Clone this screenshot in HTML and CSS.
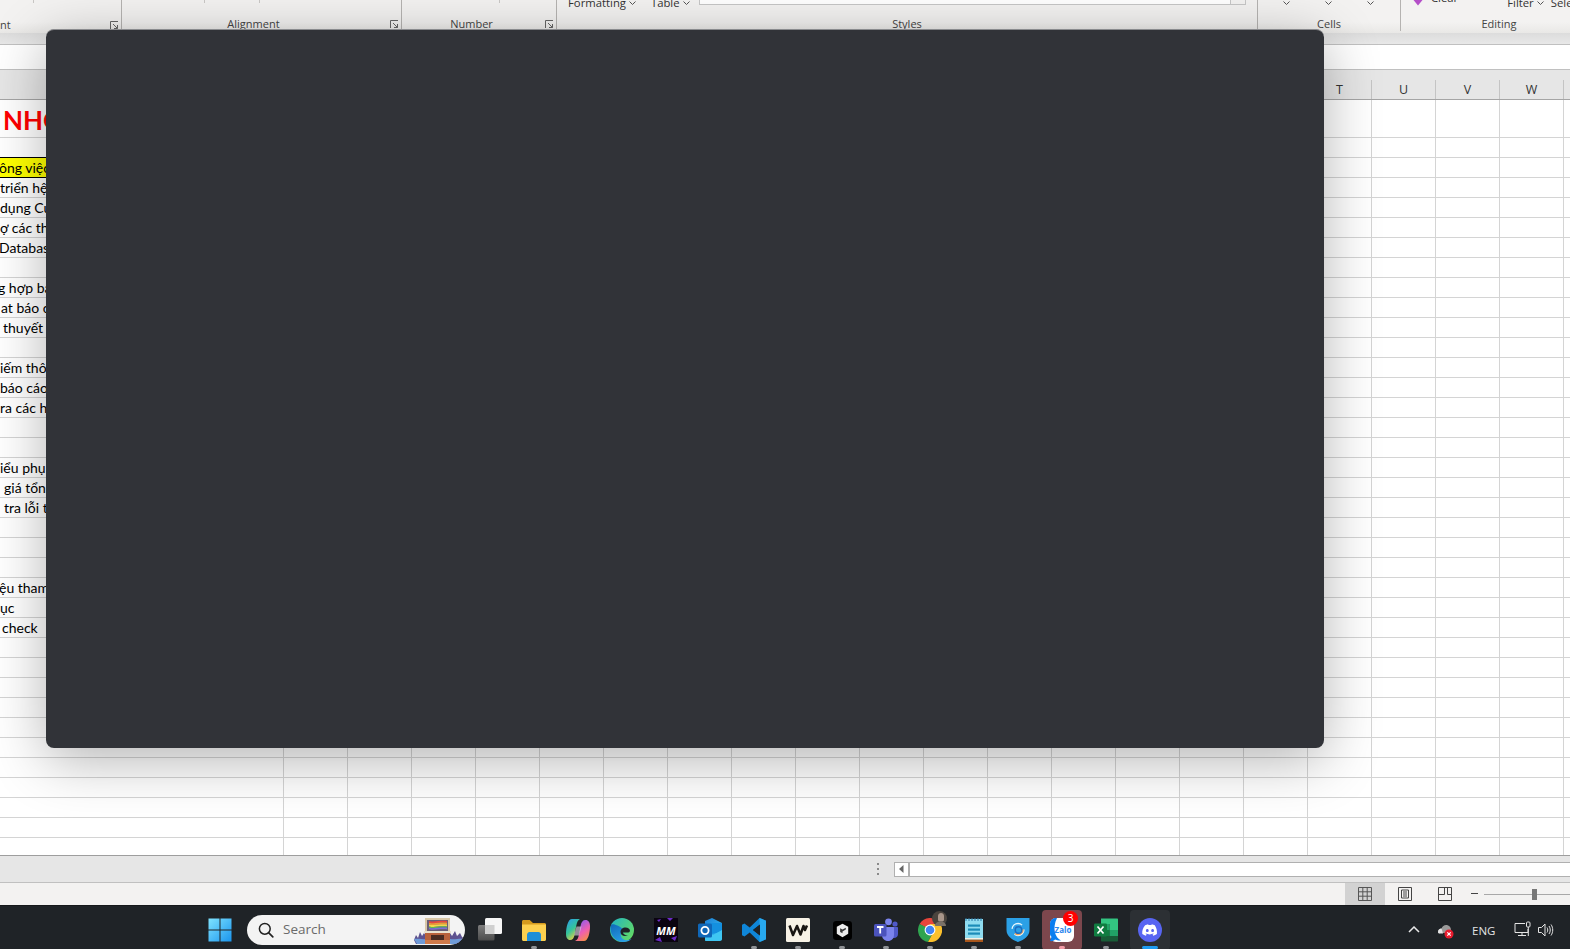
FILE: index.html
```html
<!DOCTYPE html>
<html lang="vi">
<head>
<meta charset="utf-8">
<title>Excel</title>
<link rel="stylesheet" href="styles.css">
</head>
<body>
<div class="app">
  <header class="ribbon">
    <section class="grp g-font">
      <div class="grp-top"><i class="tick tick-1"></i></div>
      <div class="grp-label"><span class="lab-cut">nt</span><svg class="launch" viewBox="0 0 9 9"><path d="M.5 8V.5H8M3 3l4.500 4.500M4 7.500h3.500V4" fill="none" stroke="#666"/></svg></div>
    </section>
    <section class="grp g-align">
      <div class="grp-top"><i class="tick tick-2"></i><i class="tick tick-3"></i></div>
      <div class="grp-label"><span>Alignment</span><svg class="launch" viewBox="0 0 9 9"><path d="M.5 8V.5H8M3 3l4.500 4.500M4 7.500h3.500V4" fill="none" stroke="#666"/></svg></div>
    </section>
    <section class="grp g-num">
      <div class="grp-top"><i class="tick tick-4"></i></div>
      <div class="grp-label"><span>Number</span><svg class="launch" viewBox="0 0 9 9"><path d="M.5 8V.5H8M3 3l4.500 4.500M4 7.500h3.500V4" fill="none" stroke="#666"/></svg></div>
    </section>
    <section class="grp g-styles">
      <div class="grp-top styles-top">
        <span class="cmd">Formatting<svg class="chev" viewBox="0 0 7 4"><path d="M.5.500l3 3 3-3" fill="none" stroke="#555"/></svg></span>
        <span class="cmd">Table<svg class="chev" viewBox="0 0 7 4"><path d="M.5.500l3 3 3-3" fill="none" stroke="#555"/></svg></span>
        <div class="gallery"><i class="gallery-btn"></i></div>
      </div>
      <div class="grp-label"><span>Styles</span></div>
    </section>
    <section class="grp g-cells">
      <div class="grp-top cells-top">
        <svg class="chev" viewBox="0 0 7 4"><path d="M.5.500l3 3 3-3" fill="none" stroke="#555"/></svg>
        <svg class="chev" viewBox="0 0 7 4"><path d="M.5.500l3 3 3-3" fill="none" stroke="#555"/></svg>
        <svg class="chev" viewBox="0 0 7 4"><path d="M.5.500l3 3 3-3" fill="none" stroke="#555"/></svg>
      </div>
      <div class="grp-label"><span>Cells</span></div>
    </section>
    <section class="grp g-edit">
      <div class="grp-top edit-top">
        <svg class="diamond" viewBox="0 0 10 10"><path d="M5 9.500L.5 4 3 .5h4L9.500 4z" fill="#b44fc8"/></svg>
        <span class="cmd clear">Clear</span>
        <span class="cmd filter">Filter<svg class="chev" viewBox="0 0 7 4"><path d="M.5.500l3 3 3-3" fill="none" stroke="#555"/></svg></span>
        <span class="cmd">Sele</span>
      </div>
      <div class="grp-label"><span>Editing</span></div>
    </section>
  </header>

  <div class="formula-gap"></div>
  <div class="formula-bar"></div>
  <div class="col-head">
    <div class="col-spacer"></div>
    <div class="col">T</div>
    <div class="col">U</div>
    <div class="col">V</div>
    <div class="col">W</div>
  </div>

  <main class="sheet">
    <div class="row row-title"><div class="cell title">NHO</div></div>
    <div class="row"><div class="cell"></div></div>
    <div class="row"><div class="cell hl in-n1">ông việc</div></div>
    <div class="row"><div class="cell in0">triển hệ</div></div>
    <div class="row"><div class="cell in0">dụng Cu</div></div>
    <div class="row"><div class="cell in0">ợ các th</div></div>
    <div class="row"><div class="cell in-n1">Databas</div></div>
    <div class="row"><div class="cell"></div></div>
    <div class="row"><div class="cell in-n2">g hợp bá</div></div>
    <div class="row"><div class="cell in1">at báo c</div></div>
    <div class="row"><div class="cell in3">thuyết</div></div>
    <div class="row"><div class="cell"></div></div>
    <div class="row"><div class="cell in0">iếm thô</div></div>
    <div class="row"><div class="cell in0">báo cáo</div></div>
    <div class="row"><div class="cell in0">ra các hu</div></div>
    <div class="row"><div class="cell"></div></div>
    <div class="row"><div class="cell"></div></div>
    <div class="row"><div class="cell in0">iểu phụ</div></div>
    <div class="row"><div class="cell in4">giá tổn</div></div>
    <div class="row"><div class="cell in4">tra lỗi t</div></div>
    <div class="row"><div class="cell"></div></div>
    <div class="row"><div class="cell"></div></div>
    <div class="row"><div class="cell"></div></div>
    <div class="row"><div class="cell in-n1">ệu tham</div></div>
    <div class="row"><div class="cell in0">ục</div></div>
    <div class="row"><div class="cell in2">check</div></div>
    <div class="row"><div class="cell"></div></div>
    <div class="row"><div class="cell"></div></div>
    <div class="row"><div class="cell"></div></div>
    <div class="row"><div class="cell"></div></div>
    <div class="row"><div class="cell"></div></div>
    <div class="row"><div class="cell"></div></div>
    <div class="row"><div class="cell"></div></div>
    <div class="row"><div class="cell"></div></div>
    <div class="row"><div class="cell"></div></div>
    <div class="row"><div class="cell"></div></div>
    <div class="row row-last"><div class="cell"></div></div>
  </main>

  <div class="tabs-bar">
    <div class="split-dots"><i></i><i></i><i></i></div>
    <div class="hscroll">
      <div class="hscroll-btn"><svg viewBox="0 0 5 8"><path d="M4.500 0v8L0 4z" fill="#666"/></svg></div>
    </div>
  </div>

  <footer class="status">
    <div class="view view-on"><svg viewBox="0 0 14 14"><path d="M.5.500h13v13H.5zM4.800.500v13M9.200.500v13M.5 4.800h13M.5 9.200h13" fill="none" stroke="#555"/></svg></div>
    <div class="view"><svg viewBox="0 0 14 14"><path d="M.5.500h13v13H.5z" fill="none" stroke="#444"/><path d="M3.500 3h7v8h-7zM5 5h4M5 7h4M5 9h4" fill="none" stroke="#444"/></svg></div>
    <div class="view"><svg viewBox="0 0 14 14"><path d="M.5.500h13v13H.5zM.5 7.500h6V.5M9.500.5v7h4" fill="none" stroke="#444"/></svg></div>
    <div class="zoom-minus"></div>
    <div class="zoom-track"><i class="zoom-thumb"></i></div>
  </footer>

  <nav class="taskbar">
    <div class="tile tile-start">
      <svg class="ico" viewBox="0 0 24 24"><defs><linearGradient id="wg" x1="0" y1="0" x2="1" y2="1"><stop offset="0" stop-color="#7fe3ff"/><stop offset="1" stop-color="#1a95ee"/></linearGradient></defs><path fill="url(#wg)" d="M.5.500h11v11H.5zM12.500.500h11v11h-11zM.5 12.500h11v11H.5zM12.500 12.500h11v11h-11z"/></svg>
    </div>
    <div class="search">
      <svg class="search-ico" viewBox="0 0 16 16"><circle cx="6.800" cy="6.800" r="5.400" fill="none" stroke="#222" stroke-width="1.500"/><path d="M10.800 10.800l4 4" stroke="#222" stroke-width="1.700" stroke-linecap="round"/></svg>
      <span class="search-text">Search</span>
      <svg class="search-art" viewBox="0 0 51 26">
        <path d="M0 22l2-5 2 3 2-6 2 4 2-3 2 3 3-1v9H2z" fill="#5d5290"/>
        <path d="M36 15l2 3 3-5 2 5 3-3 2 4 3 2v5H36z" fill="#5d5290"/>
        <path d="M0 21c5-1 9 1 15 0v5H3zM36 21c5 1 9-1 15 0l-3 5H36z" fill="#6f9bd8"/>
        <rect x="11" y="0" width="25" height="2" fill="#d9c8a8"/>
        <rect x="11" y="2" width="2" height="11" fill="#d9c8a8"/>
        <rect x="34" y="2" width="2" height="11" fill="#d9c8a8"/>
        <rect x="13" y="2" width="21" height="11" fill="#6a5f78"/>
        <path d="M15 3c6 1.500 11-1 18 0v1.800c-7-1-12 1.500-18 0z" fill="#e8473f"/>
        <path d="M15 4.800c6 1.500 11-1 18 0v1.800c-7-1-12 1.500-18 0z" fill="#f09a36"/>
        <path d="M15 6.600c6 1.500 11-1 18 0v1.800c-7-1-12 1.500-18 0z" fill="#f3d84a"/>
        <path d="M15 8.400c6 1.500 11-1 18 0v1.400c-7-1-12 1.500-18 0z" fill="#59b85b"/>
        <path d="M15 9.800c6 1.500 11-1 18 0v1.400c-7-1-12 1.500-18 0z" fill="#7a6fd8"/>
        <rect x="10" y="13" width="27" height="2" fill="#e9e2d0"/>
        <rect x="11" y="15" width="25" height="11" fill="#b9623c"/>
        <rect x="17" y="17" width="13" height="5" fill="#4a2c22"/>
        <rect x="11" y="22" width="25" height="4" fill="#cf7a4a"/>
      </svg>
    </div>

    <div class="tile">
      <svg class="ico" viewBox="0 0 24 24"><defs><linearGradient id="tv" x1="0" y1="0" x2="0" y2="1"><stop offset="0" stop-color="#7d7d7d"/><stop offset="1" stop-color="#4c4c4c"/></linearGradient></defs><rect x="0" y="7" width="16.500" height="15.500" rx="1.500" fill="url(#tv)"/><rect x="7" y="0" width="17" height="16" rx="1.500" fill="#f6f6f6"/><path d="M7 7h9.500v9H7z" fill="#cfcfcf"/></svg>
    </div>
    <div class="tile"><i class="run"></i>
      <svg class="ico" viewBox="0 0 24 24"><path d="M0 3.500C0 2.700.7 2 1.500 2h6.200L11 5h11.500c.8 0 1.500.7 1.500 1.500V9H0z" fill="#d49a1e"/><path d="M0 6.500h24v15c0 .8-.7 1.500-1.500 1.500h-21C.7 23 0 22.300 0 21.500z" fill="#fcd04f"/><path d="M5 17c0-1.600 1-3 2.500-3h9c1.500 0 2.500 1.400 2.500 3v6H5z" fill="#1f8fd8"/></svg>
    </div>
    <div class="tile">
      <svg class="ico" viewBox="0 0 24 24"><defs><linearGradient id="c1" x1="0" y1="0" x2=".6" y2="1"><stop offset="0" stop-color="#2b9cf0"/><stop offset=".55" stop-color="#35c49a"/><stop offset="1" stop-color="#f5d33c"/></linearGradient><linearGradient id="c2" x1=".3" y1="0" x2=".8" y2="1"><stop offset="0" stop-color="#8a5cf0"/><stop offset=".55" stop-color="#ef5fb0"/><stop offset="1" stop-color="#f6933c"/></linearGradient></defs><path d="M6 1h8c-2 1-3 3-3.700 6.500L8.500 17c-.5 3-2 5-4.500 5C1.500 22 0 19.500 0 16 0 9 2 1 6 1z" fill="url(#c1)"/><path d="M18 23h-9c2.500-1 3.300-3 4-6.500L14.800 7c.6-3 2-5 4.700-5 3 0 4.500 2.500 4.500 6 0 7-2 15-6 15z" fill="url(#c2)"/><path d="M10.500 8.500h5l-2.500 9H8z" fill="#f2e9f5" opacity=".55"/></svg>
    </div>
    <div class="tile">
      <svg class="ico" viewBox="0 0 24 24"><defs><linearGradient id="e1" x1="0" y1="0" x2="1" y2=".6"><stop offset="0" stop-color="#1fb4c8"/><stop offset="1" stop-color="#5fd86a"/></linearGradient><linearGradient id="e2" x1="0" y1="0" x2=".6" y2="1"><stop offset="0" stop-color="#0f6ab8"/><stop offset="1" stop-color="#2a9fe8"/></linearGradient></defs><circle cx="12" cy="12" r="12" fill="url(#e1)"/><path d="M1 7C-1 15 4 24 13 24c4 0 6.500-1 8.500-3-4 2-9 1.500-10.500-2.500-1-3 .5-6 3-7C9 8 3 5 1 7z" fill="url(#e2)"/><path d="M10.500 14c0-2.500 2.200-4.500 5-4.500 2.500 0 4.500 1.500 4.500 3.200 0 1.300-1.300 1.800-2.800 1.800H13c.3 2 2.500 3 5 2.800-3.500 2-7.500 0-7.500-3.300z" fill="#1e2226"/></svg>
    </div>
    <div class="tile">
      <svg class="ico" viewBox="0 0 24 24"><rect width="24" height="24" fill="#0a0410"/><path d="M13 0h6l-3 3zM1 22l5-3 2 5zM17 20l6-2-2 5zM3 2l4-1-2 3z" fill="#6d2bc9"/><text class="mm" x="12" y="16.500" text-anchor="middle">MM</text></svg>
    </div>
    <div class="tile">
      <svg class="ico" viewBox="0 0 24 24"><defs><linearGradient id="o1" x1="0" y1="0" x2="1" y2="1"><stop offset="0" stop-color="#1c7fd8"/><stop offset="1" stop-color="#35c3f0"/></linearGradient></defs><path d="M7 3l7-3 10 5v15c0 1-1 2-2 2H7z" fill="url(#o1)"/><path d="M13 5l11 0v9l-11 2z" fill="#1490df"/><path d="M7 13l8 4 9-5v9c0 1-1 2-2 2H8c-.6 0-1-.4-1-1z" fill="#3fc6f2"/><rect x="0" y="5.500" width="14" height="14" rx="1.500" fill="#0f67b8"/><circle cx="7" cy="12.500" r="3.600" fill="none" stroke="#fff" stroke-width="1.800"/></svg>
    </div>
    <div class="tile"><i class="run"></i>
      <svg class="ico" viewBox="0 0 24 24"><path d="M17.500 0L7.700 9.500 2.500 5.500 0 6.800v10.400l2.500 1.300 5.200-4L17.500 24 24 21.300V2.700zM18 6.500v11L11 12z" fill="#0f86d8"/><path d="M17.500 0L24 2.700v18.600L17.500 24z" fill="#27a8ee"/><path d="M18 6.500v11L11 12z" fill="#1e2226"/></svg>
    </div>
    <div class="tile"><i class="run"></i>
      <svg class="ico" viewBox="0 0 24 24"><rect width="24" height="24" rx="1.500" fill="#f7f2e6"/><path d="M3.500 7.500L7 17l4-9 3.500 8.500L17.500 8l1.500 4 2-4.500" fill="none" stroke="#181512" stroke-width="2.500" stroke-linejoin="round"/></svg>
    </div>
    <div class="tile"><i class="run"></i>
      <svg class="ico ico-s" viewBox="0 0 20 20"><rect width="20" height="20" rx="3.500" fill="#000"/><path d="M10 3l6 3v7.500L10 17l-6-3.500V6z" fill="#ececec"/><path d="M10 9L7.500 7.500v4L10 13zM10 9l3.500-2v2L10 11z" fill="#3a3a3a"/></svg>
    </div>
    <div class="tile"><i class="run"></i>
      <svg class="ico" viewBox="0 0 24 24"><circle cx="14.500" cy="3.800" r="3.400" fill="#7b83eb"/><circle cx="21" cy="6" r="2.600" fill="#5059c9"/><path d="M17 9h6c.6 0 1 .4 1 1v6c0 2.500-2 4-4 4h-3z" fill="#5059c9"/><path d="M8 9h11c.6 0 1 .4 1 1v7c0 3.500-2.500 6-6 6s-6-2.500-6-6z" fill="#7b83eb"/><rect x="0" y="6" width="12.500" height="12.500" rx="1.500" fill="#4b53bc"/><path d="M3 9h6.500M6.200 9v6.500" stroke="#fff" stroke-width="1.800"/></svg>
    </div>
    <div class="tile"><i class="run"></i>
      <svg class="ico" viewBox="0 0 24 24"><path d="M12 12L1.600 6A12 12 0 0 1 22.400 6z" fill="#e8453c"/><path d="M1.600 6A12 12 0 0 0 10 23.900L16 13z" fill="#2fa44f"/><path d="M22.400 6A12 12 0 0 1 10 23.900L16 13 12 6z" fill="#fbc02d"/><circle cx="12" cy="12" r="5.400" fill="#fff"/><circle cx="12" cy="12" r="4.300" fill="#4285f4"/></svg>
      <svg class="avatar" viewBox="0 0 15 15"><circle cx="7.500" cy="7.500" r="7.500" fill="#4a443e"/><path d="M6 5c0-2 1.500-3 3-3s3 1 3 3v4c0 2-6 2-6 0z" fill="#a8968a"/><path d="M3 15c0-3 2-4.500 5.500-4.500S14 12 14 15z" fill="#7a7168"/></svg>
    </div>
    <div class="tile"><i class="run"></i>
      <svg class="ico" viewBox="0 0 24 24"><rect x="3" y="1" width="18" height="22.500" fill="#8fdcf0"/><path d="M4 0v3M7 0v3M10 0v3M13 0v3M16 0v3M19 0v3" stroke="#2d7aa8" stroke-width="1"/><rect x="6" y="6.500" width="12" height="2.200" fill="#1c8cb8"/><rect x="6" y="10.500" width="12" height="2.200" fill="#1c8cb8"/><rect x="6" y="14.500" width="12" height="2.200" fill="#1c8cb8"/><rect x="3" y="20" width="18" height="1.600" fill="#f6f0e2"/><rect x="3" y="21.600" width="18" height="2.400" fill="#a8561c"/></svg>
    </div>
    <div class="tile"><i class="run"></i>
      <svg class="ico" viewBox="0 0 24 24"><path d="M.5 0h23v12c0 6-5 9.500-11.500 12C5.500 21.500.5 18 .5 12z" fill="#2ba0e6"/><circle cx="12" cy="11.500" r="6" fill="none" stroke="#e8f6fc" stroke-width="1.300" stroke-dasharray="13 6"/><circle cx="12" cy="11.500" r="5" fill="none" stroke="#eda35c" stroke-width="1.500" stroke-dasharray="11 20"/><circle cx="12.500" cy="12" r="3.300" fill="none" stroke="#1d6cc0" stroke-width="1.400"/></svg>
    </div>
    <div class="tile tile-zalo"><i class="run run-pink"></i>
      <svg class="ico" viewBox="0 0 24 24"><rect width="24" height="24" rx="6" fill="#fff"/><path d="M7 0h-1C2.500 0 0 2.500 0 6v10c0 1 .5 2 1.500 2.800L0 23c2 .5 4-.3 5-1.500 1 .5 3 1 6 1-6-3-9-12-4-22.500z" fill="#0a7ef0"/><text class="zalo" x="13" y="14.500" text-anchor="middle">Zalo</text></svg>
      <span class="badge">3</span>
    </div>
    <div class="tile"><i class="run"></i>
      <svg class="ico" viewBox="0 0 24 24"><path d="M7 .5h16c.6 0 1 .4 1 1V6H7z" fill="#33c481"/><path d="M7 6h8.500v6H7z" fill="#21a366"/><path d="M15.500 6H24v6h-8.500z" fill="#33c481"/><path d="M7 12h8.500v6H7z" fill="#107c41"/><path d="M15.500 12H24v6h-8.500z" fill="#21a366"/><path d="M7 18h17v4.500c0 .6-.4 1-1 1H8c-.6 0-1-.4-1-1z" fill="#185c37"/><rect x="0" y="5.500" width="13" height="13" rx="1.200" fill="#107c41"/><path d="M3.500 8.500l6 7M9.500 8.500l-6 7" stroke="#fff" stroke-width="1.700"/></svg>
    </div>
    <div class="tile tile-active"><i class="run run-blue"></i>
      <svg class="ico" viewBox="0 0 24 24"><circle cx="12" cy="12" r="12" fill="#5865f2"/><path d="M16.800 7.300c-1-.4-2-.8-3-1l-.4.800c-1-.2-2-.2-2.900 0l-.4-.8c-1 .2-2 .6-3 1C4.600 10.300 4 13.200 4.300 16c1.200.9 2.400 1.500 3.600 1.800l.8-1.300c-.4-.2-.9-.4-1.200-.6l.3-.3c2.500 1.100 5.200 1.100 7.600 0l.3.300c-.4.200-.8.400-1.200.6l.8 1.300c1.200-.3 2.400-.9 3.600-1.800.4-3.300-.5-6.100-2.100-8.700zM9.300 14.100c-.8 0-1.400-.7-1.400-1.600s.6-1.600 1.400-1.600 1.400.7 1.400 1.600-.6 1.600-1.400 1.600zm5.300 0c-.8 0-1.400-.7-1.400-1.600s.6-1.600 1.400-1.600 1.400.7 1.400 1.600-.6 1.600-1.400 1.600z" fill="#fff"/></svg>
    </div>

    <div class="tray">
      <svg class="tray-caret" viewBox="0 0 12 7"><path d="M1 6l5-5 5 5" fill="none" stroke="#e8e8e8" stroke-width="1.500"/></svg>
      <svg class="tray-cloud" viewBox="0 0 18 16"><path d="M1 9c0-2 1.500-3.500 3.500-3.500C5.500 3 7.500 1.500 10 2c2.500.5 4 2.500 4 5v3H3C1.800 10.500 1 10 1 9z" fill="#9a9a9a"/><path d="M1 9c0-2 1.500-3.500 3.500-3.500L6 10.500H3C1.800 10.500 1 10 1 9z" fill="#e4e4e4"/><circle cx="12" cy="11" r="4.500" fill="#e81b2e"/><path d="M10.300 9.300l3.400 3.400M13.700 9.300l-3.400 3.400" stroke="#fff" stroke-width="1.200"/></svg>
      <span class="lang">ENG</span>
      <svg class="tray-net" viewBox="0 0 17 16"><path d="M11 2.500H1V11.500h13V8M4 14.500h8M8 11.500v3" fill="none" stroke="#e4e4e4"/><rect x="12.500" y="1" width="3.500" height="5" rx="1" fill="none" stroke="#e4e4e4"/><path d="M14.300 6v9" stroke="#e4e4e4"/></svg>
      <svg class="tray-vol" viewBox="0 0 16 14"><path d="M.5 4.500h3L7 1v12L3.500 9.500h-3z" fill="none" stroke="#e4e4e4"/><path d="M9 4.500c1 1.500 1 3.500 0 5M11 3c1.700 2.300 1.700 5.700 0 8M13 1.500c2.300 3.300 2.300 7.700 0 11" fill="none" stroke="#e4e4e4"/></svg>
    </div>
  </nav>

  <div class="dialog" role="dialog"></div>
</div>
</body>
</html>
```
FILE: styles.css
```css
* { box-sizing: border-box; }
html, body { margin: 0; padding: 0; height: 100%; overflow: hidden; }
body { background: #fff; font-family: "Open Sans", "Liberation Sans", sans-serif; color: #333; }

.app { position: relative; width: 1570px; height: 949px; display: flex; flex-direction: column; overflow: hidden; }

/* Ribbon */
.ribbon { height: 33px; flex: none; display: flex; overflow: hidden; background: linear-gradient(#f3f2f1 0, #f3f2f1 22px, #e9e8e6 33px); }
.grp { position: relative; flex: none; display: flex; flex-direction: column; border-right: 1px solid #b5b3b1; height: 31px; }
.g-font { width: 122px; }
.g-align { width: 280px; }
.g-num { width: 155px; }
.g-styles { width: 701px; }
.g-cells { width: 143px; }
.g-edit { flex: 1 1 0; min-width: 0; border-right: 0; }
.grp-top { position: relative; height: 18px; display: flex; align-items: flex-start; }
.grp-label { position: relative; height: 14px; font-size: 11px; line-height: 14px; text-align: center; color: #444; margin-top: 1px; }
.g-align .grp-label { padding-right: 16px; }
.g-num .grp-label { padding-right: 15px; }
.g-edit .grp-label { padding-left: 27px; }
.lab-cut { position: absolute; left: 0; top: 0; }
.launch { position: absolute; right: 2px; top: 3px; width: 9px; height: 9px; }
.tick { position: absolute; top: 0; width: 1px; height: 3px; background: #c9c7c5; }
.tick-1 { left: 33px; }
.tick-2 { left: 82px; }
.tick-3 { left: 137px; }
.tick-4 { left: 97px; }
.styles-top { padding-left: 11px; }
.cmd { font-size: 11.300px; line-height: 14px; margin-top: -4px; color: #333; white-space: nowrap; display: inline-flex; align-items: center; }
.chev { width: 7px; height: 4px; margin-left: 3px; flex: none; }
.styles-top .cmd + .cmd { margin-left: 15px; }
.gallery { position: absolute; left: 142px; top: -2px; width: 547px; height: 7px; background: #fff; border: 1px solid #c6c6c6; }
.gallery-btn { position: absolute; right: 0; top: 0; width: 15px; height: 5px; background: #f3f2f1; border-left: 1px solid #c6c6c6; }
.cells-top { padding-left: 25px; gap: 35px; }
.cells-top .chev { margin: 0; margin-top: 1px; }
.edit-top { padding-left: 12px; }
.diamond { width: 10px; height: 10px; margin-top: -4px; flex: none; }
.clear { margin-left: 8px; margin-top: -9px; }
.filter { margin-left: 49px; margin-right: 7px; }

/* Formula area */
.formula-gap { height: 11px; flex: none; background: linear-gradient(#dcdcdc, #e8e8e8); }
.formula-bar { height: 26px; flex: none; background: #fff; border-top: 1px solid #c0c0c0; border-bottom: 1px solid #c0c0c0; }
.col-head { height: 30px; flex: none; display: flex; align-items: flex-end; background: #e6e6e6; border-bottom: 1px solid #a5a5a5; }
.col-spacer { width: 1308px; flex: none; }
.col { width: 64px; height: 19px; flex: none; border-right: 1px solid #c4c4c4; text-align: center; font-size: 12.500px; line-height: 19px; color: #333; }

/* Sheet */
.sheet { flex: 1; min-height: 0; overflow: hidden; background: #fff; }
.row { height: 20px; display: flex; border-bottom: 1px solid #d4d4d4; background-image: linear-gradient(to right, #d4d4d4 1px, transparent 1px); background-size: 64px 100%; background-position: 283px 0; background-repeat: repeat-x; }
.row-title { height: 38px; }
.row-last { border-bottom: 0; }
.cell { width: 283px; flex: none; background: #fff; font-family: Lato, "Open Sans", sans-serif; font-size: 14px; line-height: 19px; color: #000; white-space: nowrap; overflow: hidden; }
.title { font-size: 26px; font-weight: 700; color: #f00; line-height: 37px; padding: 2px 0 0 3px; }
.hl { background: #ff0; height: 20px; border-bottom: 1px solid #000; box-shadow: 0 -1px 0 #000; }
.in-n2 { text-indent: -2px; }
.in-n1 { text-indent: -1px; }
.in0 { text-indent: 0; }
.in1 { text-indent: 1px; }
.in2 { text-indent: 2px; }
.in3 { text-indent: 3px; }
.in4 { text-indent: 4px; }

/* Sheet tab bar */
.tabs-bar { height: 28px; flex: none; display: flex; align-items: center; background: #e6e6e6; border-top: 1px solid #9e9e9e; border-bottom: 1px solid #c0c0c0; padding-left: 877px; }
.split-dots { width: 2px; display: flex; flex-direction: column; gap: 3px; margin-right: 15px; }
.split-dots i { display: block; width: 2px; height: 2px; background: #8a8a8a; }
.hscroll { flex: 1; height: 15px; background: #fff; border: 1px solid #b0b0b0; border-right: 0; }
.hscroll-btn { width: 15px; height: 13px; border-right: 2px solid #b0b0b0; display: flex; align-items: center; justify-content: center; }
.hscroll-btn svg { width: 5px; height: 8px; }

/* Status bar */
.status { height: 22px; flex: none; display: flex; align-items: stretch; background: #f3f2f1; padding-left: 1345px; }
.view { width: 40px; display: flex; align-items: center; justify-content: center; }
.view svg { width: 14px; height: 14px; }
.view-on { background: #d2d2d2; }
.zoom-minus { width: 7px; height: 1px; margin: 10px 0 0 6px; background: #444; }
.zoom-track { position: relative; flex: 1; height: 1px; margin: 11px 0 0 6px; background: #a8a8a8; }
.zoom-thumb { position: absolute; left: 48px; top: -5px; width: 5px; height: 11px; background: #777; }

/* Taskbar */
.taskbar { position: relative; height: 44px; flex: none; display: flex; align-items: flex-start; gap: 4px; padding: 4px 0 0 200px; background: #1f2327; border-top: 1px solid #16181b; }
.tile { position: relative; width: 40px; height: 40px; flex: none; display: flex; align-items: center; justify-content: center; border-radius: 4px; }
.tile-start { margin-right: 3px; }
.ico { width: 24px; height: 24px; }
.ico-s { width: 19px; height: 19px; }
.run { position: absolute; left: 17px; bottom: 1px; width: 6px; height: 3px; border-radius: 2px; background: #8f9296; }
.run-pink { background: #f39aa6; }
.run-blue { left: 12px; width: 16px; background: #1e9bf0; }
.tile-zalo { background: #7c474d; }
.tile-active { background: #2c3034; }
.avatar { position: absolute; left: 22px; top: 1px; width: 15px; height: 15px; }
.badge { position: absolute; left: 21px; top: 1px; width: 15px; height: 15px; border-radius: 50%; background: #f00; color: #fff; font-size: 10px; line-height: 15px; text-align: center; font-family: "Open Sans", sans-serif; }
.mm { font: italic 700 11px "Open Sans", sans-serif; fill: #fff; }
.zalo { font: 700 8px "Open Sans", sans-serif; fill: #2a86ee; }

.search { position: relative; width: 218px; height: 30px; margin-top: 5px; margin-left: 0; margin-right: 1px; flex: none; display: flex; align-items: center; padding-left: 11px; background: #f3f3f3; border-radius: 15px; overflow: hidden; }
.search-ico { width: 16px; height: 16px; flex: none; }
.search-text { margin-left: 9px; margin-top: -2px; font-size: 13.500px; color: #6a6a6a; font-family: "Open Sans", sans-serif; }
.search-art { position: absolute; left: 167px; top: 3px; width: 51px; height: 26px; }

.tray { position: absolute; left: 0; top: 0; right: 0; height: 100%; pointer-events: none; }
.tray-caret { position: absolute; left: 1408px; top: 20px; width: 12px; height: 7px; }
.tray-cloud { position: absolute; left: 1437px; top: 17px; width: 18px; height: 16px; }
.lang { position: absolute; left: 1472px; top: 16px; font-size: 11.500px; line-height: 17px; color: #e4e4e4; }
.tray-net { position: absolute; left: 1514px; top: 15px; width: 17px; height: 16px; }
.tray-vol { position: absolute; left: 1538px; top: 17px; width: 16px; height: 14px; }

/* Dialog */
.dialog { position: absolute; left: 46px; top: 29px; width: 1278px; height: 719px; background: #313338; border-radius: 8px; border-top: 1px solid #8a8b8e; box-shadow: 0 12px 56px rgba(0, 0, 0, .3); }
```
